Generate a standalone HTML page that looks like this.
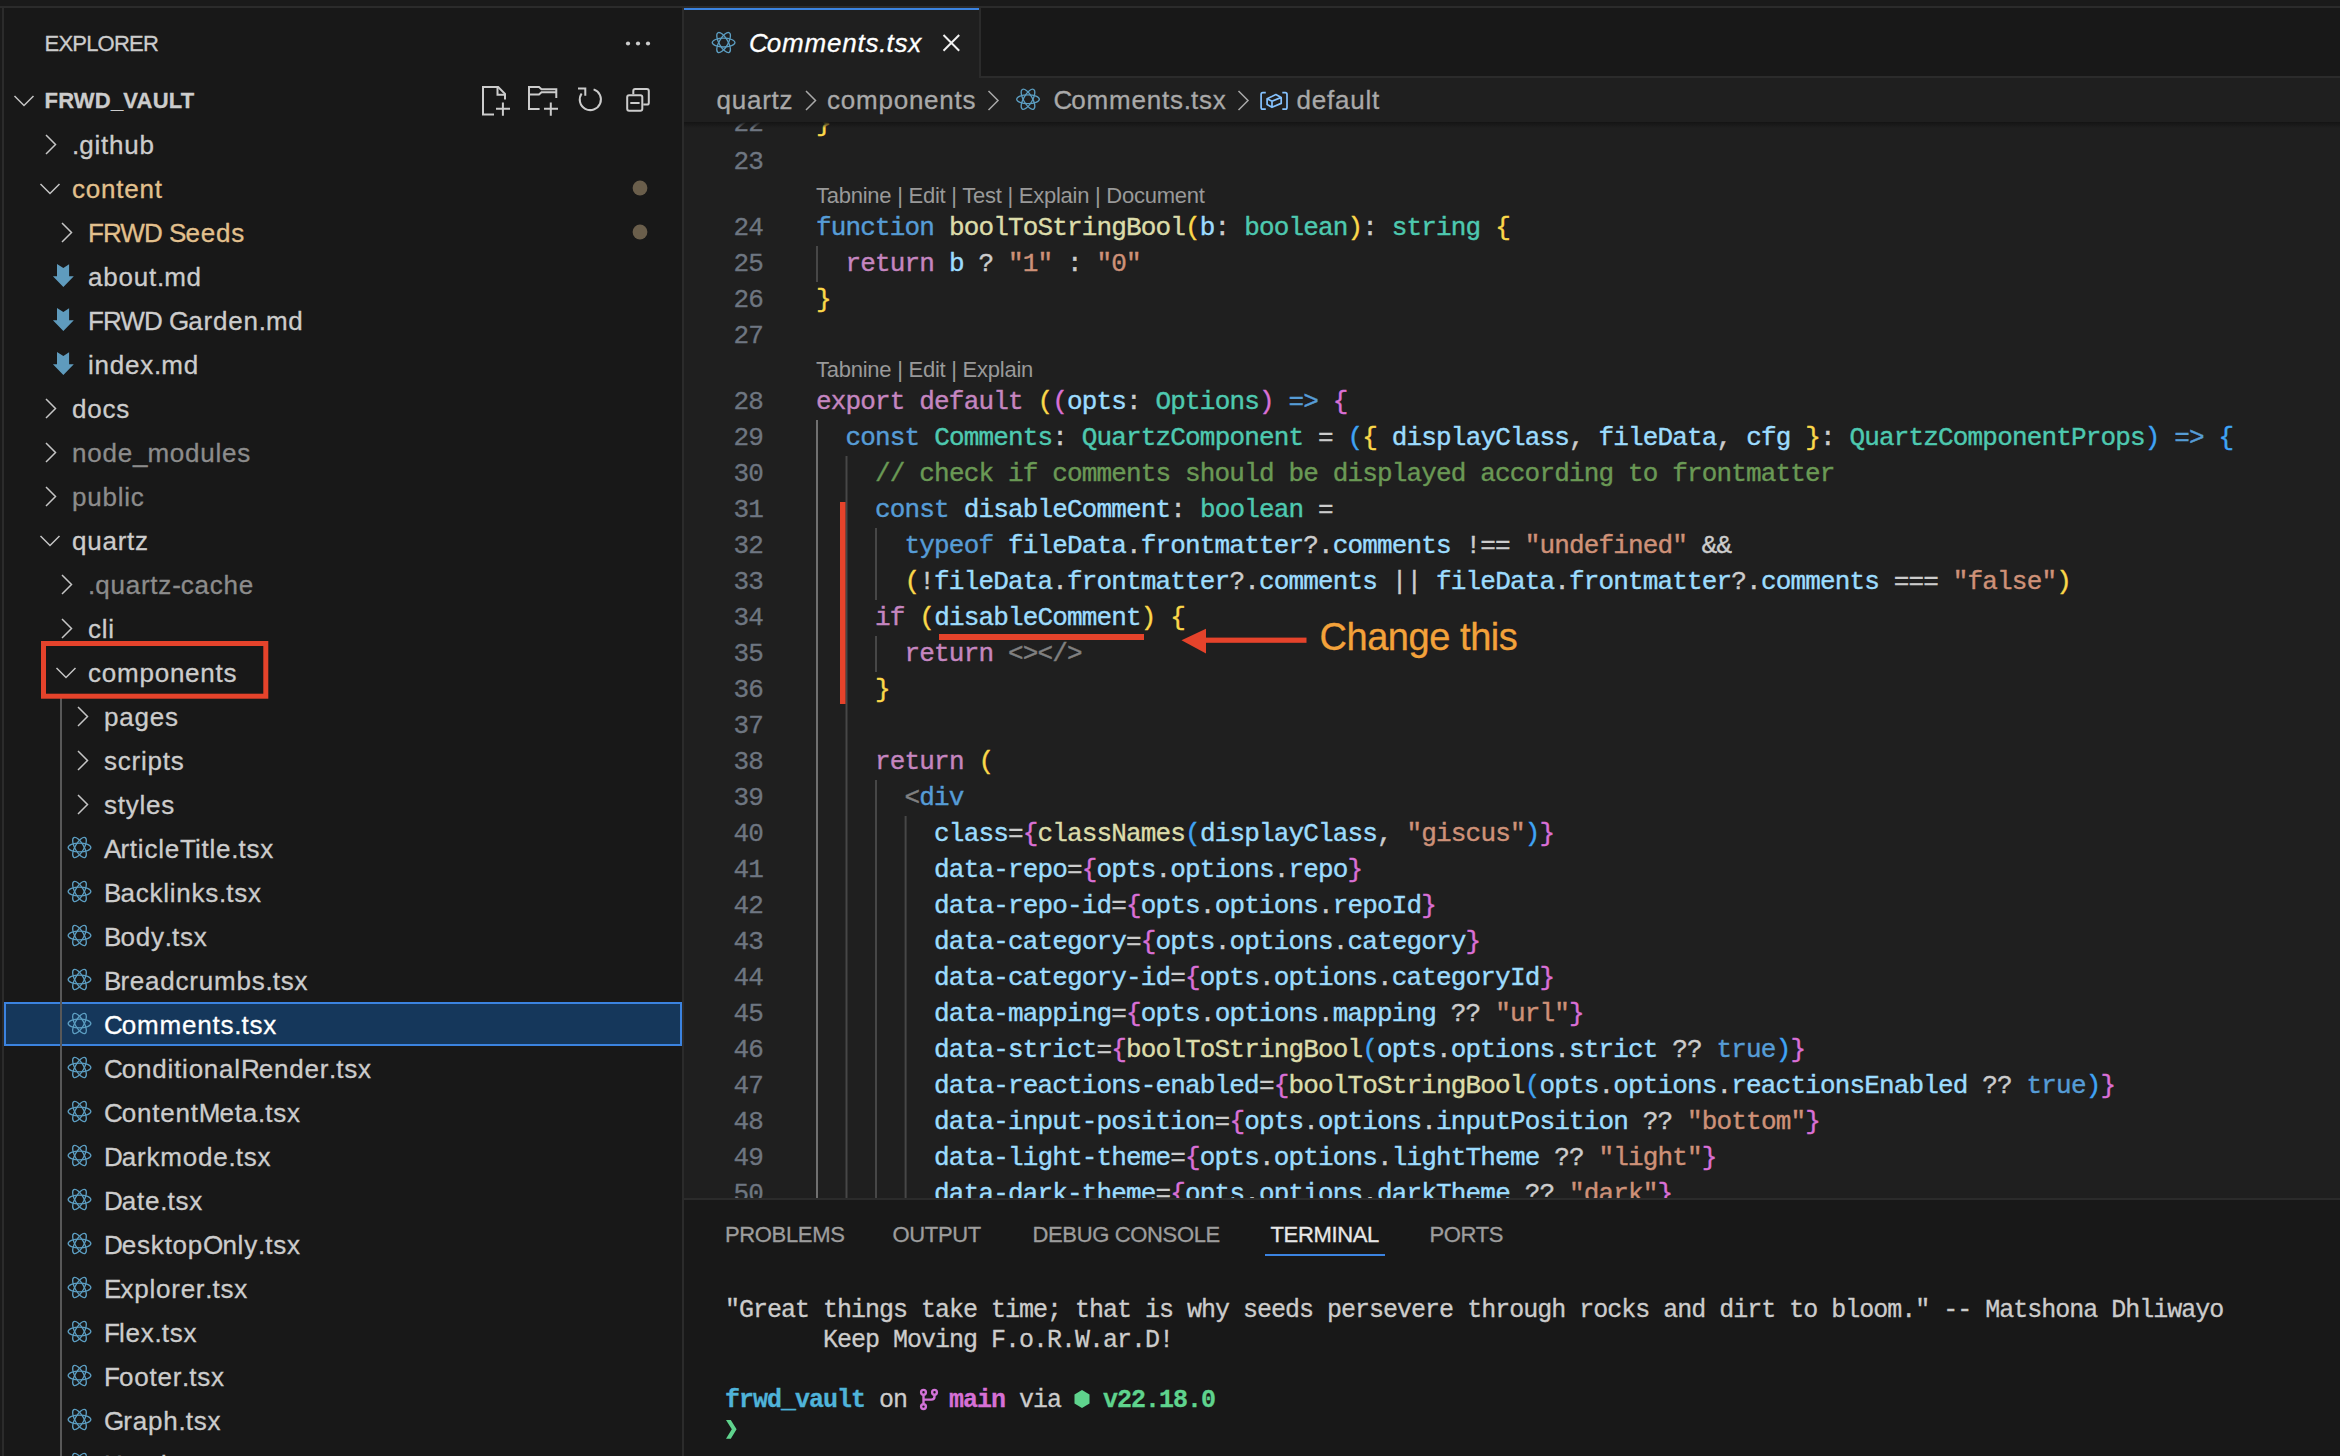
<!DOCTYPE html><html><head><meta charset="utf-8"><title>VS Code</title><style>
*{margin:0;padding:0}
html,body{width:2340px;height:1456px;overflow:hidden;background:#181818}
.t{position:absolute;white-space:pre;-webkit-text-stroke-width:0.3px}
.cl{position:absolute;left:816.0px;height:36px;line-height:36px;font-family:'Liberation Mono', monospace;font-size:26px;letter-spacing:-0.840px;white-space:pre;-webkit-text-stroke-width:0.4px}
.ln{position:absolute;height:36px;line-height:36px;font-family:'Liberation Mono', monospace;font-size:26px;letter-spacing:-0.840px;white-space:pre;color:#6e7681;-webkit-text-stroke-width:0.3px}
.tm{position:absolute;height:30px;line-height:30px;font-family:'Liberation Mono', monospace;font-size:25px;letter-spacing:-1.000px;white-space:pre;-webkit-text-stroke-width:0.3px}
svg{position:absolute;left:0;top:0}
</style></head><body>
<div style="position:absolute;left:0;top:0;width:2340px;height:6px;background:#1a1a1a"></div>
<div style="position:absolute;left:0;top:6px;width:2340px;height:2px;background:#2b2b2b"></div>
<div style="position:absolute;left:0;top:8px;width:2px;height:1448px;background:#1a1a1a"></div>
<div style="position:absolute;left:2px;top:8px;width:2px;height:1448px;background:#2b2b2b"></div>
<div style="position:absolute;left:682px;top:8px;width:2px;height:1448px;background:#2b2b2b"></div>
<div style="position:absolute;left:684px;top:78px;width:1656px;height:1120px;background:#1f1f1f"></div>
<svg width="2340" height="1456" style="z-index:0"><rect x="816.0" y="246" width="2" height="36" fill="#474747"/><rect x="816.0" y="420" width="2" height="778" fill="#707070"/><rect x="845.5" y="456" width="2" height="742" fill="#474747"/><rect x="875.0" y="528" width="2" height="72" fill="#474747"/><rect x="875.0" y="780" width="2" height="418" fill="#474747"/><rect x="875.0" y="636" width="2" height="36" fill="#474747"/><rect x="904.6" y="816" width="2" height="382" fill="#474747"/></svg>
<div class="cl" style="top:106px"><span style="color:#fbd84a">}</span></div>
<div class="ln" style="top:106px;left:733.48px">22</div>
<div class="cl" style="top:144px"></div>
<div class="ln" style="top:144px;left:733.48px">23</div>
<div class="cl" style="top:210px"><span style="color:#569cd6">function</span><span style="color:#cccccc"> </span><span style="color:#dcdcaa">boolToStringBool</span><span style="color:#fbd84a">(</span><span style="color:#9cdcfe">b</span><span style="color:#cccccc">: </span><span style="color:#4ec9b0">boolean</span><span style="color:#fbd84a">)</span><span style="color:#cccccc">: </span><span style="color:#4ec9b0">string</span><span style="color:#cccccc"> </span><span style="color:#fbd84a">{</span></div>
<div class="ln" style="top:210px;left:733.48px">24</div>
<div class="cl" style="top:246px"><span style="color:#cccccc">  </span><span style="color:#c586c0">return</span><span style="color:#cccccc"> </span><span style="color:#9cdcfe">b</span><span style="color:#cccccc"> ? </span><span style="color:#ce9178">"1"</span><span style="color:#cccccc"> : </span><span style="color:#ce9178">"0"</span></div>
<div class="ln" style="top:246px;left:733.48px">25</div>
<div class="cl" style="top:282px"><span style="color:#fbd84a">}</span></div>
<div class="ln" style="top:282px;left:733.48px">26</div>
<div class="cl" style="top:318px"></div>
<div class="ln" style="top:318px;left:733.48px">27</div>
<div class="cl" style="top:384px"><span style="color:#c586c0">export</span><span style="color:#cccccc"> </span><span style="color:#c586c0">default</span><span style="color:#cccccc"> </span><span style="color:#fbd84a">(</span><span style="color:#da70d6">(</span><span style="color:#9cdcfe">opts</span><span style="color:#cccccc">: </span><span style="color:#4ec9b0">Options</span><span style="color:#da70d6">)</span><span style="color:#cccccc"> </span><span style="color:#569cd6">=&gt;</span><span style="color:#cccccc"> </span><span style="color:#da70d6">{</span></div>
<div class="ln" style="top:384px;left:733.48px">28</div>
<div class="cl" style="top:420px"><span style="color:#cccccc">  </span><span style="color:#569cd6">const</span><span style="color:#cccccc"> </span><span style="color:#4ec9b0">Comments</span><span style="color:#cccccc">: </span><span style="color:#4ec9b0">QuartzComponent</span><span style="color:#cccccc"> = </span><span style="color:#3fa4f5">(</span><span style="color:#fbd84a">{</span><span style="color:#cccccc"> </span><span style="color:#9cdcfe">displayClass</span><span style="color:#cccccc">, </span><span style="color:#9cdcfe">fileData</span><span style="color:#cccccc">, </span><span style="color:#9cdcfe">cfg</span><span style="color:#cccccc"> </span><span style="color:#fbd84a">}</span><span style="color:#cccccc">: </span><span style="color:#4ec9b0">QuartzComponentProps</span><span style="color:#3fa4f5">)</span><span style="color:#cccccc"> </span><span style="color:#569cd6">=&gt;</span><span style="color:#cccccc"> </span><span style="color:#3fa4f5">{</span></div>
<div class="ln" style="top:420px;left:733.48px">29</div>
<div class="cl" style="top:456px"><span style="color:#cccccc">    </span><span style="color:#6a9955">// check if comments should be displayed according to frontmatter</span></div>
<div class="ln" style="top:456px;left:733.48px">30</div>
<div class="cl" style="top:492px"><span style="color:#cccccc">    </span><span style="color:#569cd6">const</span><span style="color:#cccccc"> </span><span style="color:#9cdcfe">disableComment</span><span style="color:#cccccc">: </span><span style="color:#4ec9b0">boolean</span><span style="color:#cccccc"> =</span></div>
<div class="ln" style="top:492px;left:733.48px">31</div>
<div class="cl" style="top:528px"><span style="color:#cccccc">      </span><span style="color:#569cd6">typeof</span><span style="color:#cccccc"> </span><span style="color:#9cdcfe">fileData</span><span style="color:#cccccc">.</span><span style="color:#9cdcfe">frontmatter</span><span style="color:#cccccc">?.</span><span style="color:#9cdcfe">comments</span><span style="color:#cccccc"> !== </span><span style="color:#ce9178">"undefined"</span><span style="color:#cccccc"> &amp;&amp;</span></div>
<div class="ln" style="top:528px;left:733.48px">32</div>
<div class="cl" style="top:564px"><span style="color:#cccccc">      </span><span style="color:#fbd84a">(</span><span style="color:#cccccc">!</span><span style="color:#9cdcfe">fileData</span><span style="color:#cccccc">.</span><span style="color:#9cdcfe">frontmatter</span><span style="color:#cccccc">?.</span><span style="color:#9cdcfe">comments</span><span style="color:#cccccc"> || </span><span style="color:#9cdcfe">fileData</span><span style="color:#cccccc">.</span><span style="color:#9cdcfe">frontmatter</span><span style="color:#cccccc">?.</span><span style="color:#9cdcfe">comments</span><span style="color:#cccccc"> === </span><span style="color:#ce9178">"false"</span><span style="color:#fbd84a">)</span></div>
<div class="ln" style="top:564px;left:733.48px">33</div>
<div class="cl" style="top:600px"><span style="color:#cccccc">    </span><span style="color:#c586c0">if</span><span style="color:#cccccc"> </span><span style="color:#fbd84a">(</span><span style="color:#9cdcfe">disableComment</span><span style="color:#fbd84a">)</span><span style="color:#cccccc"> </span><span style="color:#fbd84a">{</span></div>
<div class="ln" style="top:600px;left:733.48px">34</div>
<div class="cl" style="top:636px"><span style="color:#cccccc">      </span><span style="color:#c586c0">return</span><span style="color:#cccccc"> </span><span style="color:#808080">&lt;&gt;&lt;/&gt;</span></div>
<div class="ln" style="top:636px;left:733.48px">35</div>
<div class="cl" style="top:672px"><span style="color:#cccccc">    </span><span style="color:#fbd84a">}</span></div>
<div class="ln" style="top:672px;left:733.48px">36</div>
<div class="cl" style="top:708px"></div>
<div class="ln" style="top:708px;left:733.48px">37</div>
<div class="cl" style="top:744px"><span style="color:#cccccc">    </span><span style="color:#c586c0">return</span><span style="color:#cccccc"> </span><span style="color:#fbd84a">(</span></div>
<div class="ln" style="top:744px;left:733.48px">38</div>
<div class="cl" style="top:780px"><span style="color:#cccccc">      </span><span style="color:#808080">&lt;</span><span style="color:#569cd6">div</span></div>
<div class="ln" style="top:780px;left:733.48px">39</div>
<div class="cl" style="top:816px"><span style="color:#cccccc">        </span><span style="color:#9cdcfe">class</span><span style="color:#cccccc">=</span><span style="color:#da70d6">{</span><span style="color:#dcdcaa">classNames</span><span style="color:#3fa4f5">(</span><span style="color:#9cdcfe">displayClass</span><span style="color:#cccccc">, </span><span style="color:#ce9178">"giscus"</span><span style="color:#3fa4f5">)</span><span style="color:#da70d6">}</span></div>
<div class="ln" style="top:816px;left:733.48px">40</div>
<div class="cl" style="top:852px"><span style="color:#cccccc">        </span><span style="color:#9cdcfe">data-repo</span><span style="color:#cccccc">=</span><span style="color:#da70d6">{</span><span style="color:#9cdcfe">opts</span><span style="color:#cccccc">.</span><span style="color:#9cdcfe">options</span><span style="color:#cccccc">.</span><span style="color:#9cdcfe">repo</span><span style="color:#da70d6">}</span></div>
<div class="ln" style="top:852px;left:733.48px">41</div>
<div class="cl" style="top:888px"><span style="color:#cccccc">        </span><span style="color:#9cdcfe">data-repo-id</span><span style="color:#cccccc">=</span><span style="color:#da70d6">{</span><span style="color:#9cdcfe">opts</span><span style="color:#cccccc">.</span><span style="color:#9cdcfe">options</span><span style="color:#cccccc">.</span><span style="color:#9cdcfe">repoId</span><span style="color:#da70d6">}</span></div>
<div class="ln" style="top:888px;left:733.48px">42</div>
<div class="cl" style="top:924px"><span style="color:#cccccc">        </span><span style="color:#9cdcfe">data-category</span><span style="color:#cccccc">=</span><span style="color:#da70d6">{</span><span style="color:#9cdcfe">opts</span><span style="color:#cccccc">.</span><span style="color:#9cdcfe">options</span><span style="color:#cccccc">.</span><span style="color:#9cdcfe">category</span><span style="color:#da70d6">}</span></div>
<div class="ln" style="top:924px;left:733.48px">43</div>
<div class="cl" style="top:960px"><span style="color:#cccccc">        </span><span style="color:#9cdcfe">data-category-id</span><span style="color:#cccccc">=</span><span style="color:#da70d6">{</span><span style="color:#9cdcfe">opts</span><span style="color:#cccccc">.</span><span style="color:#9cdcfe">options</span><span style="color:#cccccc">.</span><span style="color:#9cdcfe">categoryId</span><span style="color:#da70d6">}</span></div>
<div class="ln" style="top:960px;left:733.48px">44</div>
<div class="cl" style="top:996px"><span style="color:#cccccc">        </span><span style="color:#9cdcfe">data-mapping</span><span style="color:#cccccc">=</span><span style="color:#da70d6">{</span><span style="color:#9cdcfe">opts</span><span style="color:#cccccc">.</span><span style="color:#9cdcfe">options</span><span style="color:#cccccc">.</span><span style="color:#9cdcfe">mapping</span><span style="color:#cccccc"> ?? </span><span style="color:#ce9178">"url"</span><span style="color:#da70d6">}</span></div>
<div class="ln" style="top:996px;left:733.48px">45</div>
<div class="cl" style="top:1032px"><span style="color:#cccccc">        </span><span style="color:#9cdcfe">data-strict</span><span style="color:#cccccc">=</span><span style="color:#da70d6">{</span><span style="color:#dcdcaa">boolToStringBool</span><span style="color:#3fa4f5">(</span><span style="color:#9cdcfe">opts</span><span style="color:#cccccc">.</span><span style="color:#9cdcfe">options</span><span style="color:#cccccc">.</span><span style="color:#9cdcfe">strict</span><span style="color:#cccccc"> ?? </span><span style="color:#569cd6">true</span><span style="color:#3fa4f5">)</span><span style="color:#da70d6">}</span></div>
<div class="ln" style="top:1032px;left:733.48px">46</div>
<div class="cl" style="top:1068px"><span style="color:#cccccc">        </span><span style="color:#9cdcfe">data-reactions-enabled</span><span style="color:#cccccc">=</span><span style="color:#da70d6">{</span><span style="color:#dcdcaa">boolToStringBool</span><span style="color:#3fa4f5">(</span><span style="color:#9cdcfe">opts</span><span style="color:#cccccc">.</span><span style="color:#9cdcfe">options</span><span style="color:#cccccc">.</span><span style="color:#9cdcfe">reactionsEnabled</span><span style="color:#cccccc"> ?? </span><span style="color:#569cd6">true</span><span style="color:#3fa4f5">)</span><span style="color:#da70d6">}</span></div>
<div class="ln" style="top:1068px;left:733.48px">47</div>
<div class="cl" style="top:1104px"><span style="color:#cccccc">        </span><span style="color:#9cdcfe">data-input-position</span><span style="color:#cccccc">=</span><span style="color:#da70d6">{</span><span style="color:#9cdcfe">opts</span><span style="color:#cccccc">.</span><span style="color:#9cdcfe">options</span><span style="color:#cccccc">.</span><span style="color:#9cdcfe">inputPosition</span><span style="color:#cccccc"> ?? </span><span style="color:#ce9178">"bottom"</span><span style="color:#da70d6">}</span></div>
<div class="ln" style="top:1104px;left:733.48px">48</div>
<div class="cl" style="top:1140px"><span style="color:#cccccc">        </span><span style="color:#9cdcfe">data-light-theme</span><span style="color:#cccccc">=</span><span style="color:#da70d6">{</span><span style="color:#9cdcfe">opts</span><span style="color:#cccccc">.</span><span style="color:#9cdcfe">options</span><span style="color:#cccccc">.</span><span style="color:#9cdcfe">lightTheme</span><span style="color:#cccccc"> ?? </span><span style="color:#ce9178">"light"</span><span style="color:#da70d6">}</span></div>
<div class="ln" style="top:1140px;left:733.48px">49</div>
<div class="cl" style="top:1176px"><span style="color:#cccccc">        </span><span style="color:#9cdcfe">data-dark-theme</span><span style="color:#cccccc">=</span><span style="color:#da70d6">{</span><span style="color:#9cdcfe">opts</span><span style="color:#cccccc">.</span><span style="color:#9cdcfe">options</span><span style="color:#cccccc">.</span><span style="color:#9cdcfe">darkTheme</span><span style="color:#cccccc"> ?? </span><span style="color:#ce9178">"dark"</span><span style="color:#da70d6">}</span></div>
<div class="ln" style="top:1176px;left:733.48px">50</div>
<div class="t" style="left:816px;top:178.5px;font-size:22px;line-height:33px;color:#999999;font-family:'Liberation Sans', sans-serif;letter-spacing:-0.25px;-webkit-text-stroke-width:0">Tabnine | Edit | Test | Explain | Document</div>
<div class="t" style="left:816px;top:352.5px;font-size:22px;line-height:33px;color:#999999;font-family:'Liberation Sans', sans-serif;letter-spacing:-0.25px;-webkit-text-stroke-width:0">Tabnine | Edit | Explain</div>
<div style="position:absolute;left:684px;top:78px;width:1656px;height:44px;background:#1f1f1f"></div>
<div style="position:absolute;left:4px;top:1002px;width:678px;height:44px;box-sizing:border-box;border:2px solid #3b83e0;background:#15375b"></div>
<div style="position:absolute;left:684px;top:8px;width:295px;height:70px;background:#1f1f1f"></div>
<div style="position:absolute;left:684px;top:8px;width:295px;height:2px;background:#3b83e0"></div>
<div style="position:absolute;left:979px;top:8px;width:2px;height:70px;background:#2b2b2b"></div>
<div style="position:absolute;left:979px;top:76px;width:1361px;height:2px;background:#2b2b2b"></div>
<div style="position:absolute;left:684px;top:122px;width:1656px;height:6px;background:linear-gradient(#141414,rgba(31,31,31,0))"></div>
<div style="position:absolute;left:684px;top:1198px;width:1656px;height:2px;background:#2b2b2b"></div>
<div style="position:absolute;left:684px;top:1200px;width:1656px;height:256px;background:#181818"></div>
<div class="t" style="left:725px;top:1218.0px;font-size:22px;line-height:33px;color:#9d9d9d;font-family:'Liberation Sans', sans-serif;letter-spacing:-0.35px">PROBLEMS</div>
<div class="t" style="left:892.5px;top:1218.0px;font-size:22px;line-height:33px;color:#9d9d9d;font-family:'Liberation Sans', sans-serif;letter-spacing:-0.35px">OUTPUT</div>
<div class="t" style="left:1032.5px;top:1218.0px;font-size:22px;line-height:33px;color:#9d9d9d;font-family:'Liberation Sans', sans-serif;letter-spacing:-0.35px">DEBUG CONSOLE</div>
<div class="t" style="left:1270.5px;top:1218.0px;font-size:22px;line-height:33px;color:#e7e7e7;font-family:'Liberation Sans', sans-serif;letter-spacing:-0.35px">TERMINAL</div>
<div class="t" style="left:1429.5px;top:1218.0px;font-size:22px;line-height:33px;color:#9d9d9d;font-family:'Liberation Sans', sans-serif;letter-spacing:-0.35px">PORTS</div>
<div style="position:absolute;left:1265px;top:1254px;width:120px;height:2px;background:#3b83e0"></div>
<div class="tm" style="left:725.00px;top:1295.5px;color:#cccccc;font-weight:normal">"Great things take time; that is why seeds persevere through rocks and dirt to bloom." -- Matshona Dhliwayo</div>
<div class="tm" style="left:823.00px;top:1325.5px;color:#cccccc;font-weight:normal">Keep Moving F.o.R.W.ar.D!</div>
<div class="tm" style="left:725.00px;top:1385.5px;color:#4fb3d9;font-weight:bold">frwd_vault</div>
<div class="tm" style="left:879.00px;top:1385.5px;color:#cccccc;font-weight:normal">on</div>
<div class="tm" style="left:949.00px;top:1385.5px;color:#d670d6;font-weight:bold">main</div>
<div class="tm" style="left:1019.00px;top:1385.5px;color:#cccccc;font-weight:normal">via</div>
<div class="tm" style="left:1103.00px;top:1385.5px;color:#5fd38d;font-weight:bold">v22.18.0</div>
<div class="t" style="left:72px;top:125.50px;font-size:26px;line-height:39.0px;color:#cccccc;font-family:'Liberation Sans', sans-serif;font-weight:normal;font-style:normal;letter-spacing:0px;"><span style="letter-spacing:0.00px">.</span><span style="letter-spacing:0.77px">github</span></div>
<div class="t" style="left:72px;top:169.50px;font-size:26px;line-height:39.0px;color:#e2c08d;font-family:'Liberation Sans', sans-serif;font-weight:normal;font-style:normal;letter-spacing:0px;"><span style="letter-spacing:0.77px">content</span></div>
<div class="t" style="left:88px;top:213.50px;font-size:26px;line-height:39.0px;color:#e2c08d;font-family:'Liberation Sans', sans-serif;font-weight:normal;font-style:normal;letter-spacing:0px;"><span style="letter-spacing:-0.93px">FRWD</span><span style="letter-spacing:0.00px"> </span><span style="letter-spacing:-0.93px">S</span><span style="letter-spacing:0.77px">eeds</span></div>
<div class="t" style="left:88px;top:257.50px;font-size:26px;line-height:39.0px;color:#cccccc;font-family:'Liberation Sans', sans-serif;font-weight:normal;font-style:normal;letter-spacing:0px;"><span style="letter-spacing:0.77px">about</span><span style="letter-spacing:0.00px">.</span><span style="letter-spacing:0.77px">md</span></div>
<div class="t" style="left:88px;top:301.50px;font-size:26px;line-height:39.0px;color:#cccccc;font-family:'Liberation Sans', sans-serif;font-weight:normal;font-style:normal;letter-spacing:0px;"><span style="letter-spacing:-0.93px">FRWD</span><span style="letter-spacing:0.00px"> </span><span style="letter-spacing:-0.93px">G</span><span style="letter-spacing:0.77px">arden</span><span style="letter-spacing:0.00px">.</span><span style="letter-spacing:0.77px">md</span></div>
<div class="t" style="left:88px;top:345.50px;font-size:26px;line-height:39.0px;color:#cccccc;font-family:'Liberation Sans', sans-serif;font-weight:normal;font-style:normal;letter-spacing:0px;"><span style="letter-spacing:0.77px">index</span><span style="letter-spacing:0.00px">.</span><span style="letter-spacing:0.77px">md</span></div>
<div class="t" style="left:72px;top:389.50px;font-size:26px;line-height:39.0px;color:#cccccc;font-family:'Liberation Sans', sans-serif;font-weight:normal;font-style:normal;letter-spacing:0px;"><span style="letter-spacing:0.77px">docs</span></div>
<div class="t" style="left:72px;top:433.50px;font-size:26px;line-height:39.0px;color:#8c8c8c;font-family:'Liberation Sans', sans-serif;font-weight:normal;font-style:normal;letter-spacing:0px;"><span style="letter-spacing:0.77px">node</span><span style="letter-spacing:0.00px">_</span><span style="letter-spacing:0.77px">modules</span></div>
<div class="t" style="left:72px;top:477.50px;font-size:26px;line-height:39.0px;color:#8c8c8c;font-family:'Liberation Sans', sans-serif;font-weight:normal;font-style:normal;letter-spacing:0px;"><span style="letter-spacing:0.77px">public</span></div>
<div class="t" style="left:72px;top:521.50px;font-size:26px;line-height:39.0px;color:#cccccc;font-family:'Liberation Sans', sans-serif;font-weight:normal;font-style:normal;letter-spacing:0px;"><span style="letter-spacing:0.77px">quartz</span></div>
<div class="t" style="left:88px;top:565.50px;font-size:26px;line-height:39.0px;color:#8c8c8c;font-family:'Liberation Sans', sans-serif;font-weight:normal;font-style:normal;letter-spacing:0px;"><span style="letter-spacing:0.00px">.</span><span style="letter-spacing:0.77px">quartz</span><span style="letter-spacing:0.00px">-</span><span style="letter-spacing:0.77px">cache</span></div>
<div class="t" style="left:88px;top:609.50px;font-size:26px;line-height:39.0px;color:#cccccc;font-family:'Liberation Sans', sans-serif;font-weight:normal;font-style:normal;letter-spacing:0px;"><span style="letter-spacing:0.77px">cli</span></div>
<div class="t" style="left:88px;top:653.50px;font-size:26px;line-height:39.0px;color:#cccccc;font-family:'Liberation Sans', sans-serif;font-weight:normal;font-style:normal;letter-spacing:0px;"><span style="letter-spacing:0.77px">components</span></div>
<div class="t" style="left:104px;top:697.50px;font-size:26px;line-height:39.0px;color:#cccccc;font-family:'Liberation Sans', sans-serif;font-weight:normal;font-style:normal;letter-spacing:0px;"><span style="letter-spacing:0.77px">pages</span></div>
<div class="t" style="left:104px;top:741.50px;font-size:26px;line-height:39.0px;color:#cccccc;font-family:'Liberation Sans', sans-serif;font-weight:normal;font-style:normal;letter-spacing:0px;"><span style="letter-spacing:0.77px">scripts</span></div>
<div class="t" style="left:104px;top:785.50px;font-size:26px;line-height:39.0px;color:#cccccc;font-family:'Liberation Sans', sans-serif;font-weight:normal;font-style:normal;letter-spacing:0px;"><span style="letter-spacing:0.77px">styles</span></div>
<div class="t" style="left:104px;top:829.50px;font-size:26px;line-height:39.0px;color:#cccccc;font-family:'Liberation Sans', sans-serif;font-weight:normal;font-style:normal;letter-spacing:0px;"><span style="letter-spacing:-0.93px">A</span><span style="letter-spacing:0.77px">rticle</span><span style="letter-spacing:-0.93px">T</span><span style="letter-spacing:0.77px">itle</span><span style="letter-spacing:0.00px">.</span><span style="letter-spacing:0.77px">tsx</span></div>
<div class="t" style="left:104px;top:873.50px;font-size:26px;line-height:39.0px;color:#cccccc;font-family:'Liberation Sans', sans-serif;font-weight:normal;font-style:normal;letter-spacing:0px;"><span style="letter-spacing:-0.93px">B</span><span style="letter-spacing:0.77px">acklinks</span><span style="letter-spacing:0.00px">.</span><span style="letter-spacing:0.77px">tsx</span></div>
<div class="t" style="left:104px;top:917.50px;font-size:26px;line-height:39.0px;color:#cccccc;font-family:'Liberation Sans', sans-serif;font-weight:normal;font-style:normal;letter-spacing:0px;"><span style="letter-spacing:-0.93px">B</span><span style="letter-spacing:0.77px">ody</span><span style="letter-spacing:0.00px">.</span><span style="letter-spacing:0.77px">tsx</span></div>
<div class="t" style="left:104px;top:961.50px;font-size:26px;line-height:39.0px;color:#cccccc;font-family:'Liberation Sans', sans-serif;font-weight:normal;font-style:normal;letter-spacing:0px;"><span style="letter-spacing:-0.93px">B</span><span style="letter-spacing:0.77px">readcrumbs</span><span style="letter-spacing:0.00px">.</span><span style="letter-spacing:0.77px">tsx</span></div>
<div class="t" style="left:104px;top:1005.50px;font-size:26px;line-height:39.0px;color:#ffffff;font-family:'Liberation Sans', sans-serif;font-weight:normal;font-style:normal;letter-spacing:0px;"><span style="letter-spacing:-0.93px">C</span><span style="letter-spacing:0.77px">omments</span><span style="letter-spacing:0.00px">.</span><span style="letter-spacing:0.77px">tsx</span></div>
<div class="t" style="left:104px;top:1049.50px;font-size:26px;line-height:39.0px;color:#cccccc;font-family:'Liberation Sans', sans-serif;font-weight:normal;font-style:normal;letter-spacing:0px;"><span style="letter-spacing:-0.93px">C</span><span style="letter-spacing:0.77px">onditional</span><span style="letter-spacing:-0.93px">R</span><span style="letter-spacing:0.77px">ender</span><span style="letter-spacing:0.00px">.</span><span style="letter-spacing:0.77px">tsx</span></div>
<div class="t" style="left:104px;top:1093.50px;font-size:26px;line-height:39.0px;color:#cccccc;font-family:'Liberation Sans', sans-serif;font-weight:normal;font-style:normal;letter-spacing:0px;"><span style="letter-spacing:-0.93px">C</span><span style="letter-spacing:0.77px">ontent</span><span style="letter-spacing:-0.93px">M</span><span style="letter-spacing:0.77px">eta</span><span style="letter-spacing:0.00px">.</span><span style="letter-spacing:0.77px">tsx</span></div>
<div class="t" style="left:104px;top:1137.50px;font-size:26px;line-height:39.0px;color:#cccccc;font-family:'Liberation Sans', sans-serif;font-weight:normal;font-style:normal;letter-spacing:0px;"><span style="letter-spacing:-0.93px">D</span><span style="letter-spacing:0.77px">arkmode</span><span style="letter-spacing:0.00px">.</span><span style="letter-spacing:0.77px">tsx</span></div>
<div class="t" style="left:104px;top:1181.50px;font-size:26px;line-height:39.0px;color:#cccccc;font-family:'Liberation Sans', sans-serif;font-weight:normal;font-style:normal;letter-spacing:0px;"><span style="letter-spacing:-0.93px">D</span><span style="letter-spacing:0.77px">ate</span><span style="letter-spacing:0.00px">.</span><span style="letter-spacing:0.77px">tsx</span></div>
<div class="t" style="left:104px;top:1225.50px;font-size:26px;line-height:39.0px;color:#cccccc;font-family:'Liberation Sans', sans-serif;font-weight:normal;font-style:normal;letter-spacing:0px;"><span style="letter-spacing:-0.93px">D</span><span style="letter-spacing:0.77px">esktop</span><span style="letter-spacing:-0.93px">O</span><span style="letter-spacing:0.77px">nly</span><span style="letter-spacing:0.00px">.</span><span style="letter-spacing:0.77px">tsx</span></div>
<div class="t" style="left:104px;top:1269.50px;font-size:26px;line-height:39.0px;color:#cccccc;font-family:'Liberation Sans', sans-serif;font-weight:normal;font-style:normal;letter-spacing:0px;"><span style="letter-spacing:-0.93px">E</span><span style="letter-spacing:0.77px">xplorer</span><span style="letter-spacing:0.00px">.</span><span style="letter-spacing:0.77px">tsx</span></div>
<div class="t" style="left:104px;top:1313.50px;font-size:26px;line-height:39.0px;color:#cccccc;font-family:'Liberation Sans', sans-serif;font-weight:normal;font-style:normal;letter-spacing:0px;"><span style="letter-spacing:-0.93px">F</span><span style="letter-spacing:0.77px">lex</span><span style="letter-spacing:0.00px">.</span><span style="letter-spacing:0.77px">tsx</span></div>
<div class="t" style="left:104px;top:1357.50px;font-size:26px;line-height:39.0px;color:#cccccc;font-family:'Liberation Sans', sans-serif;font-weight:normal;font-style:normal;letter-spacing:0px;"><span style="letter-spacing:-0.93px">F</span><span style="letter-spacing:0.77px">ooter</span><span style="letter-spacing:0.00px">.</span><span style="letter-spacing:0.77px">tsx</span></div>
<div class="t" style="left:104px;top:1401.50px;font-size:26px;line-height:39.0px;color:#cccccc;font-family:'Liberation Sans', sans-serif;font-weight:normal;font-style:normal;letter-spacing:0px;"><span style="letter-spacing:-0.93px">G</span><span style="letter-spacing:0.77px">raph</span><span style="letter-spacing:0.00px">.</span><span style="letter-spacing:0.77px">tsx</span></div>
<div class="t" style="left:104px;top:1445.50px;font-size:26px;line-height:39.0px;color:#cccccc;font-family:'Liberation Sans', sans-serif;font-weight:normal;font-style:normal;letter-spacing:0px;"><span style="letter-spacing:-0.93px">H</span><span style="letter-spacing:0.77px">ead</span><span style="letter-spacing:0.00px">.</span><span style="letter-spacing:0.77px">tsx</span></div>
<div class="t" style="left:44.5px;top:26.50px;font-size:22px;line-height:33.0px;color:#cccccc;font-family:'Liberation Sans', sans-serif;font-weight:normal;font-style:normal;letter-spacing:0px;"><span style="letter-spacing:-0.79px">EXPLORER</span></div>
<div class="t" style="left:44.5px;top:83.50px;font-size:22px;line-height:33.0px;color:#cccccc;font-family:'Liberation Sans', sans-serif;font-weight:bold;font-style:normal;letter-spacing:0.2px;">FRWD_VAULT</div>
<div class="t" style="left:749px;top:24.00px;font-size:26px;line-height:39.0px;color:#ffffff;font-family:'Liberation Sans', sans-serif;font-weight:normal;font-style:italic;letter-spacing:0px;"><span style="letter-spacing:-0.93px">C</span><span style="letter-spacing:0.77px">omments</span><span style="letter-spacing:0.00px">.</span><span style="letter-spacing:0.77px">tsx</span></div>
<div class="t" style="left:716.5px;top:80.50px;font-size:26px;line-height:39.0px;color:#a9a9a9;font-family:'Liberation Sans', sans-serif;font-weight:normal;font-style:normal;letter-spacing:0px;"><span style="letter-spacing:0.77px">quartz</span></div>
<div class="t" style="left:827px;top:80.50px;font-size:26px;line-height:39.0px;color:#a9a9a9;font-family:'Liberation Sans', sans-serif;font-weight:normal;font-style:normal;letter-spacing:0px;"><span style="letter-spacing:0.77px">components</span></div>
<div class="t" style="left:1053.5px;top:80.50px;font-size:26px;line-height:39.0px;color:#a9a9a9;font-family:'Liberation Sans', sans-serif;font-weight:normal;font-style:normal;letter-spacing:0px;"><span style="letter-spacing:-0.93px">C</span><span style="letter-spacing:0.77px">omments</span><span style="letter-spacing:0.00px">.</span><span style="letter-spacing:0.77px">tsx</span></div>
<div class="t" style="left:1296.5px;top:80.50px;font-size:26px;line-height:39.0px;color:#a9a9a9;font-family:'Liberation Sans', sans-serif;font-weight:normal;font-style:normal;letter-spacing:0px;"><span style="letter-spacing:0.77px">default</span></div>
<svg width="2340" height="1456"><path d="M46,135.0 L55.5,144.5 L46,154.0" fill="none" stroke="#c5c5c5" stroke-width="1.5"/><path d="M40.5,184 L50,193.5 L59.5,184" fill="none" stroke="#c5c5c5" stroke-width="1.5"/><circle cx="640" cy="188" r="7.4" fill="#6a5e4b"/><path d="M62,223.0 L71.5,232.5 L62,242.0" fill="none" stroke="#c5c5c5" stroke-width="1.5"/><circle cx="640" cy="232" r="7.4" fill="#6a5e4b"/><path d="M57.00,264.10 L63.35,267.90 L69.10,264.30 L69.10,276.20 L73.80,276.30 L63.35,286.90 L52.90,276.30 L57.00,276.20 Z" fill="#5f9bbd"/><path d="M57.00,308.10 L63.35,311.90 L69.10,308.30 L69.10,320.20 L73.80,320.30 L63.35,330.90 L52.90,320.30 L57.00,320.20 Z" fill="#5f9bbd"/><path d="M57.00,352.10 L63.35,355.90 L69.10,352.30 L69.10,364.20 L73.80,364.30 L63.35,374.90 L52.90,364.30 L57.00,364.20 Z" fill="#5f9bbd"/><path d="M46,399.0 L55.5,408.5 L46,418.0" fill="none" stroke="#c5c5c5" stroke-width="1.5"/><path d="M46,443.0 L55.5,452.5 L46,462.0" fill="none" stroke="#c5c5c5" stroke-width="1.5"/><path d="M46,487.0 L55.5,496.5 L46,506.0" fill="none" stroke="#c5c5c5" stroke-width="1.5"/><path d="M40.5,536 L50,545.5 L59.5,536" fill="none" stroke="#c5c5c5" stroke-width="1.5"/><path d="M62,575.0 L71.5,584.5 L62,594.0" fill="none" stroke="#c5c5c5" stroke-width="1.5"/><path d="M62,619.0 L71.5,628.5 L62,638.0" fill="none" stroke="#c5c5c5" stroke-width="1.5"/><path d="M56.5,668 L66,677.5 L75.5,668" fill="none" stroke="#c5c5c5" stroke-width="1.5"/><path d="M78,707.0 L87.5,716.5 L78,726.0" fill="none" stroke="#c5c5c5" stroke-width="1.5"/><path d="M78,751.0 L87.5,760.5 L78,770.0" fill="none" stroke="#c5c5c5" stroke-width="1.5"/><path d="M78,795.0 L87.5,804.5 L78,814.0" fill="none" stroke="#c5c5c5" stroke-width="1.5"/><g transform="translate(79.5,847.5)" fill="none" stroke="#5c9ec2" stroke-width="1.3"><ellipse rx="11.35" ry="4.40" transform="rotate(0)"/><ellipse rx="11.35" ry="4.40" transform="rotate(60)"/><ellipse rx="11.35" ry="4.40" transform="rotate(120)"/></g><g transform="translate(79.5,891.5)" fill="none" stroke="#5c9ec2" stroke-width="1.3"><ellipse rx="11.35" ry="4.40" transform="rotate(0)"/><ellipse rx="11.35" ry="4.40" transform="rotate(60)"/><ellipse rx="11.35" ry="4.40" transform="rotate(120)"/></g><g transform="translate(79.5,935.5)" fill="none" stroke="#5c9ec2" stroke-width="1.3"><ellipse rx="11.35" ry="4.40" transform="rotate(0)"/><ellipse rx="11.35" ry="4.40" transform="rotate(60)"/><ellipse rx="11.35" ry="4.40" transform="rotate(120)"/></g><g transform="translate(79.5,979.5)" fill="none" stroke="#5c9ec2" stroke-width="1.3"><ellipse rx="11.35" ry="4.40" transform="rotate(0)"/><ellipse rx="11.35" ry="4.40" transform="rotate(60)"/><ellipse rx="11.35" ry="4.40" transform="rotate(120)"/></g><g transform="translate(79.5,1023.5)" fill="none" stroke="#5c9ec2" stroke-width="1.3"><ellipse rx="11.35" ry="4.40" transform="rotate(0)"/><ellipse rx="11.35" ry="4.40" transform="rotate(60)"/><ellipse rx="11.35" ry="4.40" transform="rotate(120)"/></g><g transform="translate(79.5,1067.5)" fill="none" stroke="#5c9ec2" stroke-width="1.3"><ellipse rx="11.35" ry="4.40" transform="rotate(0)"/><ellipse rx="11.35" ry="4.40" transform="rotate(60)"/><ellipse rx="11.35" ry="4.40" transform="rotate(120)"/></g><g transform="translate(79.5,1111.5)" fill="none" stroke="#5c9ec2" stroke-width="1.3"><ellipse rx="11.35" ry="4.40" transform="rotate(0)"/><ellipse rx="11.35" ry="4.40" transform="rotate(60)"/><ellipse rx="11.35" ry="4.40" transform="rotate(120)"/></g><g transform="translate(79.5,1155.5)" fill="none" stroke="#5c9ec2" stroke-width="1.3"><ellipse rx="11.35" ry="4.40" transform="rotate(0)"/><ellipse rx="11.35" ry="4.40" transform="rotate(60)"/><ellipse rx="11.35" ry="4.40" transform="rotate(120)"/></g><g transform="translate(79.5,1199.5)" fill="none" stroke="#5c9ec2" stroke-width="1.3"><ellipse rx="11.35" ry="4.40" transform="rotate(0)"/><ellipse rx="11.35" ry="4.40" transform="rotate(60)"/><ellipse rx="11.35" ry="4.40" transform="rotate(120)"/></g><g transform="translate(79.5,1243.5)" fill="none" stroke="#5c9ec2" stroke-width="1.3"><ellipse rx="11.35" ry="4.40" transform="rotate(0)"/><ellipse rx="11.35" ry="4.40" transform="rotate(60)"/><ellipse rx="11.35" ry="4.40" transform="rotate(120)"/></g><g transform="translate(79.5,1287.5)" fill="none" stroke="#5c9ec2" stroke-width="1.3"><ellipse rx="11.35" ry="4.40" transform="rotate(0)"/><ellipse rx="11.35" ry="4.40" transform="rotate(60)"/><ellipse rx="11.35" ry="4.40" transform="rotate(120)"/></g><g transform="translate(79.5,1331.5)" fill="none" stroke="#5c9ec2" stroke-width="1.3"><ellipse rx="11.35" ry="4.40" transform="rotate(0)"/><ellipse rx="11.35" ry="4.40" transform="rotate(60)"/><ellipse rx="11.35" ry="4.40" transform="rotate(120)"/></g><g transform="translate(79.5,1375.5)" fill="none" stroke="#5c9ec2" stroke-width="1.3"><ellipse rx="11.35" ry="4.40" transform="rotate(0)"/><ellipse rx="11.35" ry="4.40" transform="rotate(60)"/><ellipse rx="11.35" ry="4.40" transform="rotate(120)"/></g><g transform="translate(79.5,1419.5)" fill="none" stroke="#5c9ec2" stroke-width="1.3"><ellipse rx="11.35" ry="4.40" transform="rotate(0)"/><ellipse rx="11.35" ry="4.40" transform="rotate(60)"/><ellipse rx="11.35" ry="4.40" transform="rotate(120)"/></g><g transform="translate(79.5,1463.5)" fill="none" stroke="#5c9ec2" stroke-width="1.3"><ellipse rx="11.35" ry="4.40" transform="rotate(0)"/><ellipse rx="11.35" ry="4.40" transform="rotate(60)"/><ellipse rx="11.35" ry="4.40" transform="rotate(120)"/></g><rect x="60" y="694" width="2" height="762" fill="#585858"/><rect x="43.5" y="643.5" width="222.3" height="52.7" fill="none" stroke="#e5432b" stroke-width="5"/><circle cx="628" cy="43.5" r="2.1" fill="#cccccc"/><circle cx="638" cy="43.5" r="2.1" fill="#cccccc"/><circle cx="648" cy="43.5" r="2.1" fill="#cccccc"/><path d="M14.5,96 L24,105.5 L33.5,96" fill="none" stroke="#c5c5c5" stroke-width="1.5"/><g fill="none" stroke="#cccccc" stroke-width="2"><path d="M494,114.5 L483,114.5 L483,87 L498.2,87 L505,93.8 L505,99.5"/><path d="M497.5,87 L497.5,94.8 L505,94.8"/><path d="M502.9,102.4 L502.9,115.7 M496,108.8 L510,108.8"/><path d="M539.6,109 L529,109 L529,87 L539,87 L541.5,89.3 L556.3,89.3 L556.3,98"/><path d="M529,94.5 L539,94.5 L541.5,92.2 L556.3,92.2"/><path d="M550.8,102.4 L550.8,115.7 M544,108.8 L558,108.8"/><path d="M593.6,89.4 A10.6,10.6 0 1 1 581.6,93.5"/><path d="M578,88.6 L585.3,88.6 L585.3,95.8"/><path d="M633.3,94.2 L633.3,91 Q633.3,89.1 635.2,89.1 L646.9,89.1 Q648.8,89.1 648.8,91 L648.8,102.7 Q648.8,104.6 646.9,104.6 L643.3,104.6"/><rect x="627.2" y="95.2" width="15.1" height="15.5" rx="1.9"/><path d="M630.3,103 L639.6,103"/></g><g transform="translate(723.6,42.6)" fill="none" stroke="#5c9ec2" stroke-width="1.3"><ellipse rx="11.35" ry="4.40" transform="rotate(0)"/><ellipse rx="11.35" ry="4.40" transform="rotate(60)"/><ellipse rx="11.35" ry="4.40" transform="rotate(120)"/></g><path d="M943.5,35 L959.2,50.7 M959.2,35 L943.5,50.7" stroke="#f0f0f0" stroke-width="2" fill="none"/><path d="M806,91 L815.5,100.5 L806,110" fill="none" stroke="#a9a9a9" stroke-width="1.5"/><path d="M988.5,91 L998,100.5 L988.5,110" fill="none" stroke="#a9a9a9" stroke-width="1.5"/><g transform="translate(1028,99.3)" fill="none" stroke="#5c9ec2" stroke-width="1.3"><ellipse rx="11.35" ry="4.40" transform="rotate(0)"/><ellipse rx="11.35" ry="4.40" transform="rotate(60)"/><ellipse rx="11.35" ry="4.40" transform="rotate(120)"/></g><path d="M1238.5,91 L1248,100.5 L1238.5,110" fill="none" stroke="#a9a9a9" stroke-width="1.5"/><g fill="none" stroke="#85c2ff" stroke-width="1.7" stroke-linejoin="round"><path d="M1265.8,92.7 L1262.8,92.7 Q1261.1,92.7 1261.1,94.4 L1261.1,107.4 Q1261.1,109.1 1262.8,109.1 L1265.8,109.1"/><path d="M1282.3,92.7 L1285.3,92.7 Q1287,92.7 1287,94.4 L1287,107.4 Q1287,109.1 1285.3,109.1 L1282.3,109.1"/><path d="M1267.1,98.7 L1275.9,94.6 L1281.2,97.4 L1281.2,103.4 L1272,107.3 L1267.1,104.6 Z M1267.1,98.7 L1272,101.2 L1281.2,97.4 M1272,101.2 L1272,107.3"/></g><rect x="840" y="502" width="5.5" height="202" fill="#e5432b"/><rect x="939" y="634" width="205" height="6" fill="#e5432b"/><rect x="1204" y="637.6" width="102.5" height="5.2" fill="#e5432b"/><path d="M1181.5,640.2 L1206,628.8 L1206,653.4 Z" fill="#e5432b"/><g fill="none" stroke="#d272d8" stroke-width="2.4"><circle cx="923.5" cy="1392.3" r="2.4"/><circle cx="934.5" cy="1392.3" r="2.4"/><circle cx="923.5" cy="1406.6" r="2.4"/><path d="M923.5,1394.8 L923.5,1404.2 M923.5,1399.6 L931.3,1399.6 Q934.5,1399.6 934.5,1396.4 L934.5,1394.8"/></g><path d="M1082,1390 L1089.5,1394.5 L1089.5,1403.5 L1082,1408 L1074.5,1403.5 L1074.5,1394.5 Z" fill="#5fd38d"/><path d="M726,1420 L730.8,1420 L736.6,1429.3 L730.8,1438.8 L726,1438.8 L731.8,1429.3 Z" fill="#5fd38d"/></svg>
<div class="t" style="left:1319.5px;top:608.5px;font-size:38px;line-height:57px;color:#f3a23a;letter-spacing:-0.45px;font-family:'Liberation Sans', sans-serif">Change this</div>
</body></html>
